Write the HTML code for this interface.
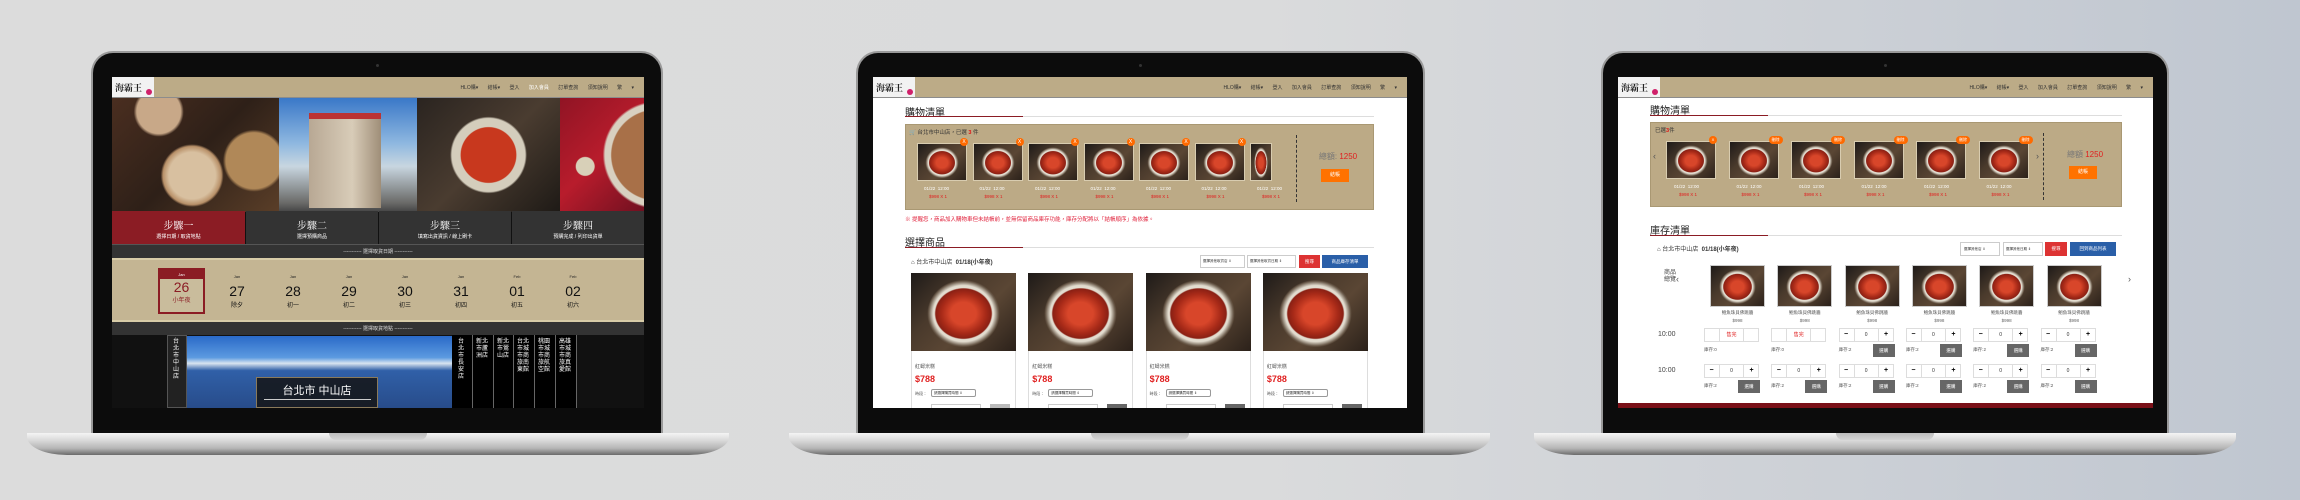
<!DOCTYPE html>
<html><head><meta charset="utf-8">
<style>
*{margin:0;padding:0;box-sizing:border-box}
body{width:2300px;height:500px;overflow:hidden;position:relative;font-family:"Liberation Sans","Noto Sans CJK TC",sans-serif;background:linear-gradient(90deg,#dcdcdc 0%,#dadbdc 55%,#ccd0d6 80%,#bfc6d0 100%)}
.a{position:absolute}
.bezel{position:absolute;background:#0c0c0c;border-radius:22px 22px 0 0;border:2px solid #9a9a9a;border-bottom:none}
.base{position:absolute;height:22px;border-radius:0 0 40px 40px/0 0 18px 18px;background:linear-gradient(180deg,#f4f4f4 0%,#d8d8d8 35%,#b5b5b5 70%,#6a6a6a 100%)}
.notch{position:absolute;top:0;height:7px;width:98px;border-radius:0 0 10px 10px;background:linear-gradient(180deg,#bcbcbc,#d6d6d6)}
.scr{position:absolute;overflow:hidden;background:#fff}
.nav{position:absolute;left:0;top:0;right:0;height:21px;background:#bcab87;border-bottom:1px solid #8c8c8c}
.logo{position:absolute;left:0;top:0;width:42px;height:20px;background:#f2f2f2;font:bold 9px "Noto Serif CJK SC",serif;color:#222;padding:4px 0 0 3px;white-space:nowrap}
.logo i{position:absolute;right:2px;bottom:2px;width:6px;height:6px;border-radius:50%;background:#d0206a}
.navt{position:absolute;top:7px;right:10px;font-size:5px;color:#333;white-space:nowrap;word-spacing:8px}
.food{background:radial-gradient(ellipse 30% 36% at 50% 52%,#d8462a 0 40%,#a82a18 70%,#8a2014 88%,transparent 92%),radial-gradient(ellipse 36% 45% at 50% 52%,#e2dccf 0 80%,#6a5a4a 92%,transparent 96%),linear-gradient(135deg,#1e1a18 0%,#4a3a2c 35%,#5a4634 60%,#2b211a 100%)}
.t{position:absolute;white-space:nowrap}
.c{text-align:center}
</style></head><body>

<!-- Laptop 1 -->
<div class="bezel" style="left:91px;top:51px;width:572px;height:383px"></div>
<div class="a" style="left:376px;top:64px;width:3px;height:3px;border-radius:50%;background:#333"></div>
<div class="base" style="left:27px;top:433px;width:702px"><div class="notch" style="left:302px"></div></div>
<div class="scr" style="left:112px;top:77px;width:532px;height:331px;background:#111">
 <div class="nav"><div class="logo">海霸王<i></i></div><div class="navt">HLO購▾ 結帳▾ 登入 <span style="color:#fff">加入會員</span> 訂單查詢 須知說明 繁 ▾</div></div>
 <div class="a" style="left:0;top:21px;width:167px;height:114px;background:radial-gradient(circle at 48% 68%,#d8c0a0 0 20%,#b89068 25%,transparent 27%),radial-gradient(circle at 28% 12%,#c8a888 0 14%,transparent 16%),radial-gradient(circle at 85% 55%,#b08858 0 18%,transparent 20%),linear-gradient(135deg,#4a2e20,#2e2018 50%,#5a3e28)"></div>
 <div class="a" style="left:167px;top:21px;width:138px;height:114px;background:linear-gradient(180deg,#3a78c8 0%,#8fb8e0 40%,#c8d6e0 60%,#6a6a68 92%,#444 100%)"><div class="a" style="left:30px;top:15px;width:72px;height:95px;background:linear-gradient(90deg,#b8a894,#d8ccb8 60%,#9f8e78);border-top:6px solid #b33"></div></div>
 <div class="a" style="left:305px;top:21px;width:143px;height:114px;background:radial-gradient(circle at 50% 50%,#c8381e 0 30%,#d4cdbc 31% 40%,transparent 42%),linear-gradient(135deg,#2a2420,#4a3c30 50%,#1e1a16)"></div>
 <div class="a" style="left:448px;top:21px;width:84px;height:114px;background:radial-gradient(circle at 115% 50%,#a87048 0 40%,#d8d0c0 41% 46%,transparent 48%),radial-gradient(circle at 30% 60%,#d8d0b8 0 10%,transparent 11%),linear-gradient(135deg,#901424,#b81c2c 50%,#701020)"></div>
 <div class="a" style="left:0;top:134px;width:133px;height:33px;background:#8b1c24"></div>
 <div class="a" style="left:134px;top:134px;width:132px;height:33px;background:#333"></div>
 <div class="a" style="left:267px;top:134px;width:132px;height:33px;background:#333"></div>
 <div class="a" style="left:400px;top:134px;width:132px;height:33px;background:#333"></div>
 <div class="t c" style="left:0;top:140px;width:133px;color:#fff;font-size:10px;font-family:'Noto Serif CJK SC',serif">步驟一</div>
 <div class="t c" style="left:134px;top:140px;width:132px;color:#fff;font-size:10px;font-family:'Noto Serif CJK SC',serif">步驟二</div>
 <div class="t c" style="left:267px;top:140px;width:132px;color:#fff;font-size:10px;font-family:'Noto Serif CJK SC',serif">步驟三</div>
 <div class="t c" style="left:400px;top:140px;width:132px;color:#fff;font-size:10px;font-family:'Noto Serif CJK SC',serif">步驟四</div>
 <div class="t c" style="left:0;top:156px;width:133px;color:#fff;font-size:5px">選擇日期 / 取貨地點</div>
 <div class="t c" style="left:134px;top:156px;width:132px;color:#fff;font-size:5px">選擇預購商品</div>
 <div class="t c" style="left:267px;top:156px;width:132px;color:#fff;font-size:5px">填寫出貨資訊 / 線上刷卡</div>
 <div class="t c" style="left:400px;top:156px;width:132px;color:#fff;font-size:5px">預購完成 / 列印出貨單</div>
 <div class="a" style="left:0;top:167px;width:532px;height:14px;background:#333;border-top:1px solid #555"></div>
 <div class="t c" style="left:0;top:171px;width:532px;color:#ddd;font-size:5px">----------- 選擇取貨日期 -----------</div>
 <div class="a" style="left:0;top:181px;width:532px;height:64px;background:#c4b593;border-top:2px solid #d8cca8;border-bottom:2px solid #d8cca8"></div>
 <div class="a" style="left:46px;top:191px;width:47px;height:46px;border:2px solid #8b1c24;background:#c9bc9c"><div style="height:9px;background:#8b1c24;color:#fff;font-size:4px;text-align:center;line-height:9px">Jan</div><div style="color:#8b1c24;font-size:14px;text-align:center;line-height:16px">26</div><div style="color:#8b1c24;font-size:6px;text-align:center">小年夜</div></div>
 <div class="t c" style="left:105px;top:197px;width:40px;font-size:4px;color:#222">Jan</div><div class="t c" style="left:105px;top:206px;width:40px;font-size:14px;color:#111">27</div><div class="t c" style="left:105px;top:223px;width:40px;font-size:6px;color:#111">除夕</div>
 <div class="t c" style="left:161px;top:197px;width:40px;font-size:4px;color:#222">Jan</div><div class="t c" style="left:161px;top:206px;width:40px;font-size:14px;color:#111">28</div><div class="t c" style="left:161px;top:223px;width:40px;font-size:6px;color:#111">初一</div>
 <div class="t c" style="left:217px;top:197px;width:40px;font-size:4px;color:#222">Jan</div><div class="t c" style="left:217px;top:206px;width:40px;font-size:14px;color:#111">29</div><div class="t c" style="left:217px;top:223px;width:40px;font-size:6px;color:#111">初二</div>
 <div class="t c" style="left:273px;top:197px;width:40px;font-size:4px;color:#222">Jan</div><div class="t c" style="left:273px;top:206px;width:40px;font-size:14px;color:#111">30</div><div class="t c" style="left:273px;top:223px;width:40px;font-size:6px;color:#111">初三</div>
 <div class="t c" style="left:329px;top:197px;width:40px;font-size:4px;color:#222">Jan</div><div class="t c" style="left:329px;top:206px;width:40px;font-size:14px;color:#111">31</div><div class="t c" style="left:329px;top:223px;width:40px;font-size:6px;color:#111">初四</div>
 <div class="t c" style="left:385px;top:197px;width:40px;font-size:4px;color:#222">Feb</div><div class="t c" style="left:385px;top:206px;width:40px;font-size:14px;color:#111">01</div><div class="t c" style="left:385px;top:223px;width:40px;font-size:6px;color:#111">初五</div>
 <div class="t c" style="left:441px;top:197px;width:40px;font-size:4px;color:#222">Feb</div><div class="t c" style="left:441px;top:206px;width:40px;font-size:14px;color:#111">02</div><div class="t c" style="left:441px;top:223px;width:40px;font-size:6px;color:#111">初六</div>
 <div class="a" style="left:0;top:245px;width:532px;height:13px;background:#333"></div>
 <div class="t c" style="left:0;top:248px;width:532px;color:#ddd;font-size:5px">----------- 選擇取貨地點 -----------</div>
 <div class="a" style="left:55px;top:258px;width:20px;height:73px;background:#222;border:1px solid #555"></div>
 <div class="t" style="left:61px;top:262px;width:8px;color:#fff;font-size:6px;line-height:7px;white-space:normal">台北市中山店</div>
 <div class="a" style="left:75px;top:259px;width:265px;height:72px;background:linear-gradient(180deg,#2a6ac8 0%,#5c9ae0 30%,#d8e4f0 38%,#3060a8 48%,#284c8a 100%)"></div>
 <div class="a" style="left:144px;top:300px;width:122px;height:31px;background:rgba(20,20,20,.85);border:1px solid #8a7a5a"></div>
 <div class="t c" style="left:144px;top:305px;width:122px;color:#fff;font-size:11px">台北市 中山店</div>
 <div class="a" style="left:152px;top:322px;width:107px;height:1px;background:#ccc"></div>
 <div class="a" style="left:340px;top:258px;width:124px;height:73px;background:#000"></div>
 <div class="a" style="left:360px;top:258px;width:1px;height:73px;background:#666"></div>
 <div class="a" style="left:381px;top:258px;width:1px;height:73px;background:#666"></div>
 <div class="a" style="left:401px;top:258px;width:1px;height:73px;background:#666"></div>
 <div class="a" style="left:422px;top:258px;width:1px;height:73px;background:#666"></div>
 <div class="a" style="left:443px;top:258px;width:1px;height:73px;background:#666"></div>
 <div class="a" style="left:464px;top:258px;width:1px;height:73px;background:#666"></div>
 <div class="t" style="left:346px;top:262px;width:8px;color:#fff;font-size:6px;line-height:7px;white-space:normal">台北市長安店</div>
 <div class="t" style="left:364px;top:262px;width:16px;color:#fff;font-size:6px;line-height:7px;white-space:normal">新北市蘆洲店</div>
 <div class="t" style="left:385px;top:262px;width:16px;color:#fff;font-size:6px;line-height:7px;white-space:normal">新北市鶯山店</div>
 <div class="t" style="left:405px;top:262px;width:16px;color:#fff;font-size:6px;line-height:7px;white-space:normal">台北市城市商旅南東館</div>
 <div class="t" style="left:426px;top:262px;width:16px;color:#fff;font-size:6px;line-height:7px;white-space:normal">桃園市城市商旅航空館</div>
 <div class="t" style="left:447px;top:262px;width:16px;color:#fff;font-size:6px;line-height:7px;white-space:normal">高雄市城市商旅真愛館</div>
</div>

<!-- Laptop 2 -->
<div class="bezel" style="left:856px;top:51px;width:569px;height:383px"></div>
<div class="a" style="left:1139px;top:64px;width:3px;height:3px;border-radius:50%;background:#333"></div>
<div class="base" style="left:789px;top:433px;width:701px"><div class="notch" style="left:302px"></div></div>
<div class="scr" id="s2" style="left:873px;top:77px;width:534px;height:331px">
 <div class="nav"><div class="logo">海霸王<i></i></div><div class="navt">HLO購▾ 結帳▾ 登入 加入會員 訂單查詢 須知說明 繁 ▾</div></div>
 <div class="t" style="left:32px;top:27px;font-size:10px;color:#222">購物清單</div>
 <div class="a" style="left:32px;top:39px;width:469px;height:1px;background:#ddd"></div>
 <div class="a" style="left:32px;top:39px;width:118px;height:1px;background:#8b1c24"></div>
 <div class="a" style="left:32px;top:47px;width:469px;height:86px;background:#bcaa86;border:1px solid #a99873"></div>
 <div class="t" style="left:36px;top:51px;font-size:5.5px;color:#333">🛒 台北市中山店，已選 <b style="color:#e01010">3</b> 件</div>
 <div class="a" style="left:423px;top:58px;width:0;height:67px;border-left:1px dashed #333"></div>
 <div class="t c" style="left:430px;top:74px;width:70px;font-size:8px;color:#777">總額: <span style="color:#e02020">1250</span></div>
 <div class="a" style="left:448px;top:92px;width:28px;height:13px;background:#ff7200;color:#fff;font-size:5px;text-align:center;line-height:13px">結帳</div>
 <div id="cart2"></div>
 <div class="t" style="left:32px;top:138px;font-size:5.5px;color:#e0203a">※ 提醒您，商品加入購物車但未結帳前，並無保留商品庫存功能，庫存分配將以「結帳順序」為依據。</div>
 <div class="t" style="left:32px;top:157px;font-size:10px;color:#222">選擇商品</div>
 <div class="a" style="left:32px;top:170px;width:469px;height:1px;background:#ddd"></div>
 <div class="a" style="left:32px;top:170px;width:118px;height:1px;background:#8b1c24"></div>
 <div class="t" style="left:38px;top:180px;font-size:6px;color:#333">⌂ 台北市中山店 &nbsp;<b>01/18(小年夜)</b></div>
 <div class="a" style="left:327px;top:178px;width:45px;height:13px;border:1px solid #ccc;font-size:3.5px;line-height:11px;padding-left:2px;color:#333">選擇其他取貨店 ⇕</div>
 <div class="a" style="left:374px;top:178px;width:49px;height:13px;border:1px solid #ccc;font-size:3.5px;line-height:11px;padding-left:2px;color:#333">選擇其他取貨日期 ⇕</div>
 <div class="a" style="left:426px;top:178px;width:21px;height:13px;background:#d33;color:#fff;font-size:4.5px;text-align:center;line-height:13px">搜尋</div>
 <div class="a" style="left:449px;top:178px;width:46px;height:13px;background:#2a5fa8;color:#fff;font-size:4.5px;text-align:center;line-height:13px">商品庫存清單</div>
 <div id="cards2"></div>
</div>

<!-- Laptop 3 -->
<div class="bezel" style="left:1601px;top:51px;width:568px;height:383px"></div>
<div class="a" style="left:1884px;top:64px;width:3px;height:3px;border-radius:50%;background:#333"></div>
<div class="base" style="left:1534px;top:433px;width:702px"><div class="notch" style="left:302px"></div></div>
<div class="scr" id="s3" style="left:1618px;top:77px;width:535px;height:331px">
 <div class="nav"><div class="logo">海霸王<i></i></div><div class="navt">HLO購▾ 結帳▾ 登入 加入會員 訂單查詢 須知說明 繁 ▾</div></div>
 <div class="t" style="left:32px;top:25px;font-size:10px;color:#222">購物清單</div>
 <div class="a" style="left:32px;top:38px;width:472px;height:1px;background:#ddd"></div>
 <div class="a" style="left:32px;top:38px;width:118px;height:1px;background:#8b1c24"></div>
 <div class="a" style="left:32px;top:45px;width:472px;height:85px;background:#bcaa86;border:1px solid #a99873"></div>
 <div class="t" style="left:37px;top:49px;font-size:5.5px;color:#333">已選<b style="color:#e01010">3</b>件</div>
 <div class="t" style="left:35px;top:74px;font-size:9px;color:#555">‹</div>
 <div class="t" style="left:418px;top:74px;font-size:9px;color:#555">›</div>
 <div class="a" style="left:425px;top:56px;width:0;height:67px;border-left:1px dashed #333"></div>
 <div class="t c" style="left:430px;top:72px;width:74px;font-size:8px;color:#777">總額 <span style="color:#e02020">1250</span></div>
 <div class="a" style="left:451px;top:89px;width:28px;height:13px;background:#ff7200;color:#fff;font-size:5px;text-align:center;line-height:13px">結帳</div>
 <div id="cart3"></div>
 <div class="t" style="left:32px;top:145px;font-size:10px;color:#222">庫存清單</div>
 <div class="a" style="left:32px;top:158px;width:472px;height:1px;background:#ddd"></div>
 <div class="a" style="left:32px;top:158px;width:118px;height:1px;background:#8b1c24"></div>
 <div class="t" style="left:39px;top:167px;font-size:6px;color:#333">⌂ 台北市中山店 &nbsp;<b>01/18(小年夜)</b></div>
 <div class="a" style="left:342px;top:165px;width:40px;height:14px;border:1px solid #ccc;font-size:3.5px;line-height:12px;padding-left:3px;color:#333">選擇其他店 ⇕</div>
 <div class="a" style="left:385px;top:165px;width:40px;height:14px;border:1px solid #ccc;font-size:3.5px;line-height:12px;padding-left:2px;color:#333">選擇其他日期 ⇕</div>
 <div class="a" style="left:427px;top:165px;width:22px;height:14px;background:#d33;color:#fff;font-size:4.5px;text-align:center;line-height:14px">搜尋</div>
 <div class="a" style="left:452px;top:165px;width:46px;height:14px;background:#2a5fa8;color:#fff;font-size:4.5px;text-align:center;line-height:14px">回到商品列表</div>
 <div class="t" style="left:45px;top:193px;width:14px;font-size:6px;line-height:7px;color:#444;white-space:normal;text-align:center">商品總覽</div>
 <div class="t" style="left:58px;top:197px;font-size:9px;color:#555">‹</div>
 <div class="t" style="left:510px;top:197px;font-size:9px;color:#555">›</div>
 <div class="t" style="left:40px;top:254px;font-size:7px;color:#444">10:00</div>
 <div class="t" style="left:40px;top:290px;font-size:7px;color:#444">10:00</div>
 <div id="inv3"></div>
 <div class="a" style="left:0;top:326px;width:535px;height:5px;background:#7a1018"></div>
</div>

<script>
function h(p,s){document.getElementById(p).insertAdjacentHTML('beforeend',s)}
for(var i=0;i<7;i++){var x=44+i*55.5;var w=i==6?22:50;
h('cart2','<div class="a food" style="left:'+x+'px;top:66px;width:'+w+'px;height:38px;border:1px solid #d8ccb0"></div>'+(i<6?'<div class="a" style="left:'+(x+43)+'px;top:61px;width:8px;height:8px;border-radius:50%;background:#ff6a00;color:#fff;font-size:5px;text-align:center;line-height:8px">X</div>':'')+'<div class="t" style="left:'+(x+7)+'px;top:109px;font-size:4.5px;color:#fff">01/22&nbsp; 12:00</div><div class="t" style="left:'+(x+12)+'px;top:117px;font-size:4.5px;color:#e02020">$998 X 1</div>');}
h('cart2','<div class="a" style="left:413px;top:60px;width:8px;height:66px;background:#bcaa86"></div>');
for(var i=0;i<6;i++){var x=48+i*62.5;
h('cart3','<div class="a food" style="left:'+x+'px;top:64px;width:50px;height:38px;border:1px solid #d8ccb0"></div><div class="a" style="left:'+(x+(i?40:43))+'px;top:59px;width:'+(i?14:8)+'px;height:8px;border-radius:4px;background:#ff6a00;color:#fff;font-size:4px;text-align:center;line-height:8px">'+(i?'刪除':'X')+'</div><div class="t" style="left:'+(x+8)+'px;top:107px;font-size:4.5px;color:#fff">01/22&nbsp; 12:00</div><div class="t" style="left:'+(x+13)+'px;top:115px;font-size:4.5px;color:#e02020">$998 X 1</div>');}
for(var i=0;i<4;i++){var x=38+i*117.3;
h('cards2','<div class="a" style="left:'+x+'px;top:196px;width:105px;height:140px;border:1px solid #ddd"></div><div class="a food" style="left:'+x+'px;top:196px;width:105px;height:78px"></div><div class="t" style="left:'+(x+4)+'px;top:286px;font-size:5px;color:#555">紅蟳米糕</div><div class="t" style="left:'+(x+4)+'px;top:297px;font-size:9px;color:#e02020;font-weight:bold">$788</div><div class="t" style="left:'+(x+4)+'px;top:314px;font-size:4px;color:#555">時段：</div><div class="a" style="left:'+(x+20)+'px;top:312px;width:45px;height:8px;border:1px solid #999;border-radius:2px;font-size:3.5px;line-height:6px;padding-left:2px;color:#333">請選擇購買時間 ⇕</div><div class="a" style="left:'+(x+20)+'px;top:327px;width:50px;height:6px;border:1px solid #ccc"></div><div class="a" style="left:'+(x+79)+'px;top:327px;width:20px;height:6px;background:'+(i?'#666':'#bbb')+'"></div>');}
for(var i=0;i<6;i++){var x=92+i*67.3;
h('inv3','<div class="a food" style="left:'+x+'px;top:188px;width:55px;height:42px;border:1px solid #ccc"></div><div class="t c" style="left:'+(x-5)+'px;top:233px;width:65px;font-size:4.5px;color:#555">鮑魚珠貝佛跳牆</div><div class="t c" style="left:'+x+'px;top:241px;width:55px;font-size:4.5px;color:#666">$998</div>');
var rows=[251,287];
for(var r=0;r<2;r++){var y=rows[r];var so=(r==0&&i<2);
if(so){h('inv3','<div class="a" style="left:'+(x-6)+'px;top:'+y+'px;width:55px;height:14px;border:1px solid #ddd"></div><div class="a" style="left:'+(x+9)+'px;top:'+y+'px;width:25px;height:14px;border-left:1px solid #ddd;border-right:1px solid #ddd;color:#e02020;font-size:5px;text-align:center;line-height:14px">售完</div><div class="t" style="left:'+(x-6)+'px;top:'+(y+19)+'px;font-size:4.5px;color:#555">庫存:0</div>')}
else{h('inv3','<div class="a" style="left:'+(x-6)+'px;top:'+y+'px;width:55px;height:14px;border:1px solid #ddd"></div><div class="a" style="left:'+(x+9)+'px;top:'+y+'px;width:25px;height:14px;border-left:1px solid #ddd;border-right:1px solid #ddd;color:#333;font-size:5px;text-align:center;line-height:14px">0</div><div class="t c" style="left:'+(x-6)+'px;top:'+(y+3)+'px;width:15px;font-size:7px;font-weight:bold">−</div><div class="t c" style="left:'+(x+34)+'px;top:'+(y+3)+'px;width:15px;font-size:7px;font-weight:bold">+</div><div class="t" style="left:'+(x-6)+'px;top:'+(y+19)+'px;font-size:4.5px;color:#555">庫存:2</div><div class="a" style="left:'+(x+28)+'px;top:'+(y+16)+'px;width:22px;height:13px;background:#666;color:#fff;font-size:4.5px;text-align:center;line-height:13px">選購</div>')}}}
</script>
</body></html>
